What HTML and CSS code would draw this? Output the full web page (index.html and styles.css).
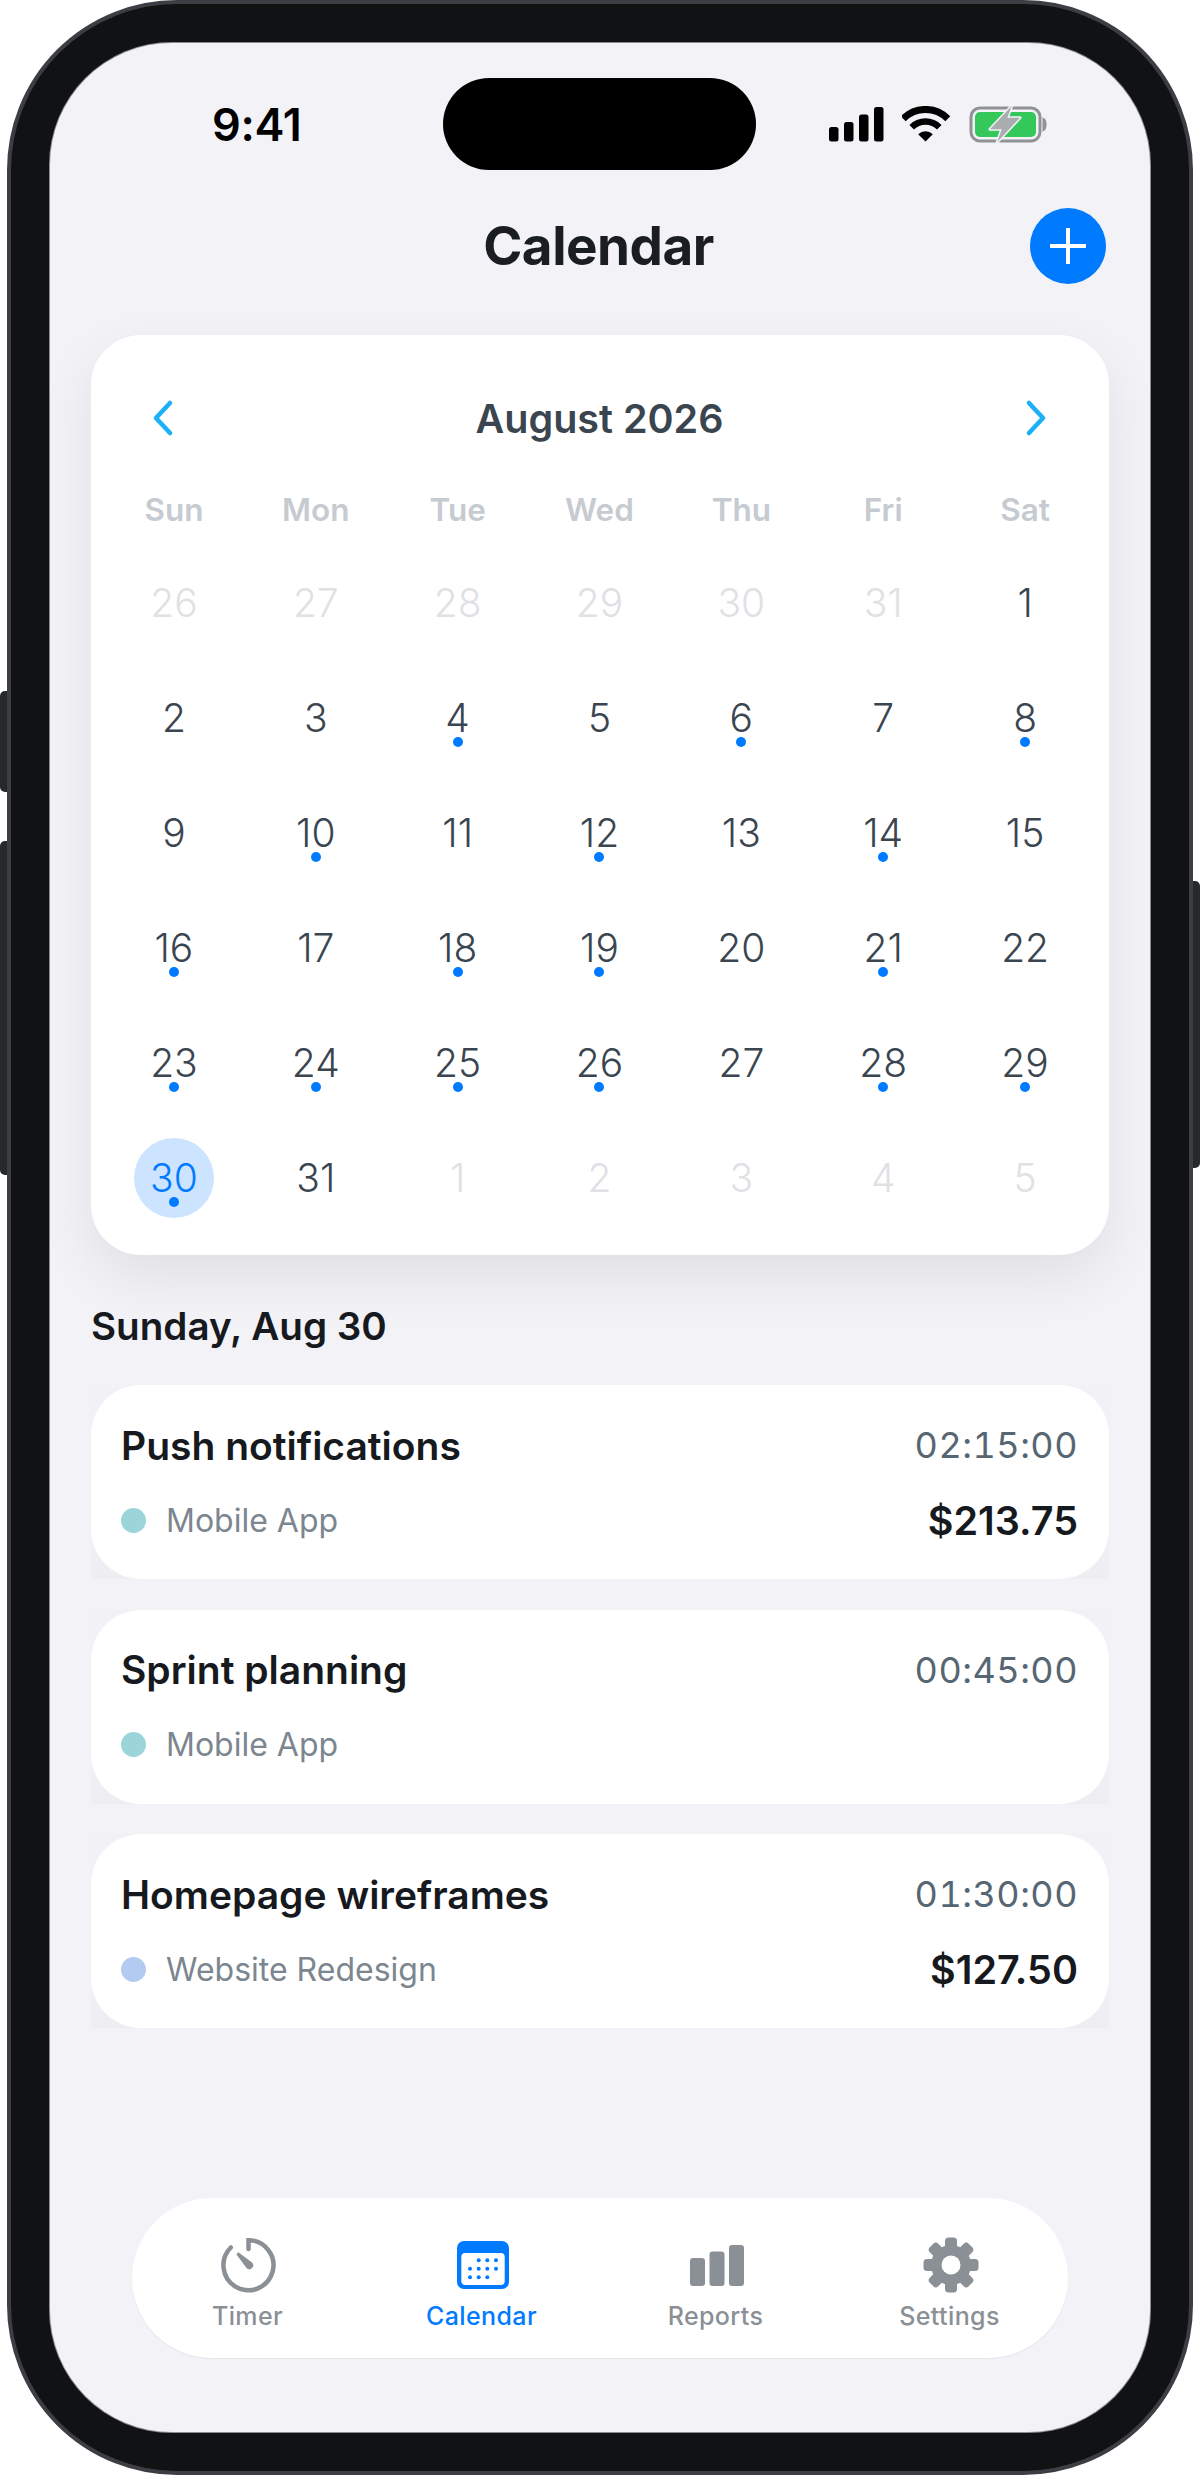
FILE: index.html
```html
<!DOCTYPE html>
<html lang="en">
<head>
<meta charset="utf-8">
<title>Calendar</title>
<link rel="stylesheet" href="styles.css">
</head>
<body>
<div class="device">
  <span class="side-btn side-btn-a"></span>
  <span class="side-btn side-btn-b"></span>
  <span class="side-btn side-btn-c"></span>
  <main class="screen">
    <div class="status">
      <span class="clock">9:41</span>
      <span class="island"></span>
      <div class="status-icons">
        <svg class="ic-signal" width="55" height="35" viewBox="0 0 55 35"><rect x="0" y="20" width="9.5" height="14.5" rx="2.5"/><rect x="15" y="15" width="9.5" height="19.5" rx="2.5"/><rect x="30" y="7.5" width="9.5" height="27" rx="2.5"/><rect x="45" y="0" width="9.5" height="34.5" rx="2.5"/></svg>
        <svg class="ic-wifi" width="48" height="36" viewBox="0 0 48 36"><path d="M1.2 12.7A31.5 31.5 0 0 1 45.8 12.7" fill="none" stroke="#000" stroke-width="7"/><path d="M9.7 21.2A19.5 19.5 0 0 1 37.3 21.2" fill="none" stroke="#000" stroke-width="6.5"/><path d="M23.5 35.5L16.2 28.2A10.5 10.5 0 0 1 30.8 28.2Z"/></svg>
        <svg class="ic-batt" width="80" height="38" viewBox="0 0 80 38"><rect x="2" y="2" width="69" height="33" rx="9" fill="none" stroke="#8f9396" stroke-width="3"/><rect x="6" y="6" width="61" height="25" rx="5" fill="#34c759"/><path d="M73.5 11.5C76 12 77.5 14 77.5 18.5S76 25 73.5 25.500Z" fill="#8f9396"/><path d="M42.700 0L21 23.300H32.700L28.300 36L51 11.700H38.300Z" fill="#a9adb0" stroke="#f2f2f7" stroke-width="3" stroke-linejoin="round" paint-order="stroke"/></svg>
      </div>
    </div>

    <header class="topbar">
      <span></span>
      <h1 class="title">Calendar</h1>
      <button class="add" type="button" aria-label="Add">
        <svg width="36" height="36" viewBox="0 0 36 36"><path d="M18 1V35M1 18H35" fill="none" stroke="#fff" stroke-width="4" stroke-linecap="round"/></svg>
      </button>
    </header>

    <section class="cal">
      <div class="cal-head">
        <svg width="24" height="40" viewBox="0 0 24 40"><path d="M19 5L5 20L19 35" fill="none" stroke="#1cb0f6" stroke-width="4.500" stroke-linecap="round" stroke-linejoin="round"/></svg>
        <h2 class="month">August 2026</h2>
        <svg width="24" height="40" viewBox="0 0 24 40"><path d="M5 5L19 20L5 35" fill="none" stroke="#1cb0f6" stroke-width="4.500" stroke-linecap="round" stroke-linejoin="round"/></svg>
      </div>
      <div class="weekdays"><span>Sun</span><span>Mon</span><span>Tue</span><span>Wed</span><span>Thu</span><span>Fri</span><span>Sat</span></div>
      <div class="days">
        <span class="day off">26</span><span class="day off">27</span><span class="day off">28</span><span class="day off">29</span><span class="day off">30</span><span class="day off">31</span><span class="day">1</span>
        <span class="day">2</span><span class="day">3</span><span class="day dot">4</span><span class="day">5</span><span class="day dot">6</span><span class="day">7</span><span class="day dot">8</span>
        <span class="day">9</span><span class="day dot">10</span><span class="day">11</span><span class="day dot">12</span><span class="day">13</span><span class="day dot">14</span><span class="day">15</span>
        <span class="day dot">16</span><span class="day">17</span><span class="day dot">18</span><span class="day dot">19</span><span class="day">20</span><span class="day dot">21</span><span class="day">22</span>
        <span class="day dot">23</span><span class="day dot">24</span><span class="day dot">25</span><span class="day dot">26</span><span class="day">27</span><span class="day dot">28</span><span class="day dot">29</span>
        <span class="day dot sel">30</span><span class="day">31</span><span class="day off">1</span><span class="day off">2</span><span class="day off">3</span><span class="day off">4</span><span class="day off">5</span>
      </div>
    </section>

    <h3 class="date">Sunday, Aug 30</h3>

    <div class="events">
      <article class="event">
        <div class="ev-title">Push notifications</div>
        <div class="ev-time">02:15:00</div>
        <div class="ev-proj"><i class="swatch teal"></i>Mobile App</div>
        <div class="ev-amt">$213.75</div>
      </article>
      <article class="event">
        <div class="ev-title">Sprint planning</div>
        <div class="ev-time">00:45:00</div>
        <div class="ev-proj"><i class="swatch teal"></i>Mobile App</div>
        <div class="ev-amt"></div>
      </article>
      <article class="event">
        <div class="ev-title">Homepage wireframes</div>
        <div class="ev-time">01:30:00</div>
        <div class="ev-proj"><i class="swatch blue"></i>Website Redesign</div>
        <div class="ev-amt">$127.50</div>
      </article>
    </div>

    <nav class="tabs">
      <div class="tab">
        <svg width="56" height="56" viewBox="0 0 56 56"><path d="M27.500 12V3.200A25 25 0 1 1 9.800 10.500" fill="none" stroke="#8a9095" stroke-width="4.500" stroke-linecap="round"/><path d="M15.300 17.300L17.300 15.300L31 25.500A3.800 3.800 0 0 1 25.500 31Z" fill="#8a9095"/></svg>
        <span>Timer</span>
      </div>
      <div class="tab active">
        <svg width="56" height="56" viewBox="0 0 56 56"><rect x="2" y="4" width="52" height="48" rx="7" fill="#007aff"/><rect x="6.300" y="16" width="43.400" height="32" rx="4" fill="#fff"/><g fill="#007aff"><circle cx="23.700" cy="23.300" r="2"/><circle cx="32.300" cy="23.300" r="2"/><circle cx="41" cy="23.300" r="2"/><circle cx="15" cy="31.700" r="2"/><circle cx="23.700" cy="31.700" r="2"/><circle cx="32.300" cy="31.700" r="2"/><circle cx="41" cy="31.700" r="2"/><circle cx="15" cy="40.300" r="2"/><circle cx="23.700" cy="40.300" r="2"/><circle cx="32.300" cy="40.300" r="2"/></g></svg>
        <span>Calendar</span>
      </div>
      <div class="tab">
        <svg width="56" height="56" viewBox="0 0 56 56"><g fill="#8a9095"><rect x="1" y="21" width="15" height="28" rx="3"/><rect x="20.500" y="14.500" width="15" height="34.500" rx="3"/><rect x="40" y="8" width="15" height="41" rx="3"/></g></svg>
        <span>Reports</span>
      </div>
      <div class="tab">
        <svg width="56" height="56" viewBox="0 0 56 56"><g fill="#8a9095"><circle cx="28" cy="28" r="20"/><rect x="22" y="0.500" width="12" height="55" rx="3.500"/><rect x="22" y="0.500" width="12" height="55" rx="3.500" transform="rotate(45 28 28)"/><rect x="22" y="0.500" width="12" height="55" rx="3.500" transform="rotate(90 28 28)"/><rect x="22" y="0.500" width="12" height="55" rx="3.500" transform="rotate(135 28 28)"/></g><circle cx="28" cy="28" r="9.500" fill="#fff"/></svg>
        <span>Settings</span>
      </div>
    </nav>
  </main>
</div>
</body>
</html>
```
FILE: styles.css
```css
* { box-sizing: border-box; }
html, body { margin: 0; padding: 0; background: #fff; }
body { width: 1200px; height: 2475px; font-family: Inter, "Liberation Sans", sans-serif; overflow: hidden; }

.device {
  position: relative;
  width: 1186px;
  height: 2475px;
  margin-left: 7px;
  padding: 39px;
  background: #111214;
  border: 4px solid #3c3e43;
  border-radius: 170px;
}
.side-btn { position: absolute; background: #26292c; }
.side-btn-a { left: -11px; top: 687px; width: 7px; height: 101px; border-radius: 5px 0 0 5px; }
.side-btn-b { left: -11px; top: 837px; width: 7px; height: 334px; border-radius: 5px 0 0 5px; }
.side-btn-c { right: -11px; top: 877px; width: 7px; height: 287px; border-radius: 0 5px 5px 0; }

.screen {
  display: flex;
  flex-direction: column;
  height: 100%;
  padding: 35px 41px 74px;
  background: #f2f2f7;
  border-radius: 122px;
  box-shadow: 0 0 0 1px #8b8c90;
}

.status { display: flex; align-items: center; height: 92px; margin-left: -41px; margin-right: -41px; padding-left: 162px; }
.clock { width: 231px; font-size: 45px; font-weight: 600; color: #000; letter-spacing: -0.3px; }
.island { width: 313px; height: 92px; border-radius: 46px; background: #000; }
.status-icons { display: flex; align-items: center; margin-left: 73px; }
.ic-signal { margin-right: 18px; }
.ic-wifi { margin-right: 19px; }
.ic-batt { margin-top: 1px; }

.topbar { display: grid; grid-template-columns: 1fr auto 1fr; align-items: center; margin-top: 38px; padding-right: 3px; }
.title { margin: 0; font-size: 53px; line-height: 76px; font-weight: 700; color: #1a1d21; letter-spacing: -0.5px; }
.add { justify-self: end; display: flex; align-items: center; justify-content: center; width: 76px; height: 76px; padding: 0; border: 0; border-radius: 50%; background: #007aff; }

.cal { margin-top: 51px; padding: 53px 13px 20px 12px; height: 920px; background: #fff; border-radius: 50px; box-shadow: 0 22px 56px rgba(0, 0, 0, 0.08); }
.cal-head { display: flex; align-items: center; justify-content: space-between; height: 60px; padding: 0 48px; }
.month { margin: 2px 0 0; font-size: 39.5px; font-weight: 570; color: #3a4550; }
.weekdays { display: grid; grid-template-columns: repeat(7, 1fr); height: 40px; margin-top: 42px; text-align: center; font-size: 31.5px; line-height: 40px; font-weight: 570; color: #c6cbd1; }
.days { display: grid; grid-template-columns: repeat(7, 1fr); grid-auto-rows: 115px; margin-top: 14.5px; }
.day { position: relative; display: flex; align-items: center; justify-content: center; font-size: 39px; font-weight: 300; color: #3a4550; }
.day.off { color: #dfe1e5; }
.day.dot::after { content: ""; position: absolute; left: 50%; top: calc(50% + 20px); width: 10px; height: 10px; margin-left: -5px; border-radius: 50%; background: #007aff; }
.day.sel { color: #007aff; isolation: isolate; }
.day.sel::before { content: ""; position: absolute; z-index: -1; left: 50%; top: 50%; width: 80px; height: 80px; margin: -39.5px 0 0 -40px; border-radius: 50%; background: #cce4ff; }

.date { margin: 47px 0 0; font-size: 38.6px; line-height: 48px; font-weight: 600; color: #16191d; }

.events { display: flex; flex-direction: column; gap: 30.700px; margin-top: 35px; }
.event { position: relative; isolation: isolate; display: grid; grid-template-columns: 1fr auto; grid-auto-rows: 48px; row-gap: 26px; align-items: center; height: 194px; padding: 36px 31px 36px 30px; }
.event::before { content: ""; position: absolute; z-index: -2; inset: 0; background: linear-gradient(rgba(0, 0, 0, 0.003) 60%, rgba(0, 0, 0, 0.018)); }
.event::after { content: ""; position: absolute; z-index: -1; inset: 0; background: #fff; border-radius: 50px; }
.ev-title { font-size: 39px; font-weight: 600; color: #16191d; }
.ev-time { font-size: 36px; font-weight: 400; color: #566672; letter-spacing: 0.5px; font-variant-numeric: tabular-nums; }
.ev-proj { display: flex; align-items: center; margin-top: 2px; font-size: 32px; color: #7c868f; }
.swatch { width: 25px; height: 25px; margin-right: 20px; border-radius: 50%; }
.swatch.teal { background: #9bd5da; }
.swatch.blue { background: #b3cbf0; }
.ev-amt { justify-self: end; margin-top: 3px; font-size: 39.5px; font-weight: 600; color: #16191d; }

.tabs { display: grid; grid-template-columns: repeat(4, 1fr); width: 936px; height: 160px; margin: auto auto 0; padding-top: 39px; background: #fff; border-radius: 80px; box-shadow: 0 1px 1px rgba(0, 0, 0, 0.06); }
.tab { display: flex; flex-direction: column; align-items: center; font-size: 25px; line-height: 30px; font-weight: 500; color: #8a9095; letter-spacing: 0.4px; }
.tab span { margin: 8px 3px 0 0; }
.tab.active { color: #007aff; }
```
